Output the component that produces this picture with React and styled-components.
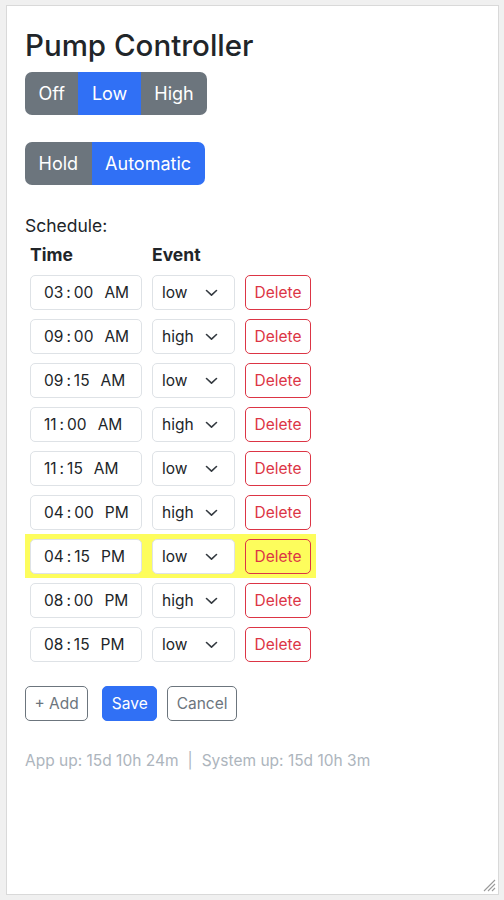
import styled, { createGlobalStyle } from "styled-components";
import { useState } from "react";

const GlobalStyle = createGlobalStyle`
  html, body {
    margin: 0;
    padding: 0;
  }
  body {
    background: #f0f0f0;
    font-family: Inter, "Liberation Sans", Arial, sans-serif;
    color: #212529;
  }
`;

const schedule = [
  { h: "03", m: "00", ap: "AM", ev: "low" },
  { h: "09", m: "00", ap: "AM", ev: "high" },
  { h: "09", m: "15", ap: "AM", ev: "low" },
  { h: "11", m: "00", ap: "AM", ev: "high" },
  { h: "11", m: "15", ap: "AM", ev: "low" },
  { h: "04", m: "00", ap: "PM", ev: "high" },
  { h: "04", m: "15", ap: "PM", ev: "low", current: true },
  { h: "08", m: "00", ap: "PM", ev: "high" },
  { h: "08", m: "15", ap: "PM", ev: "low" },
];

const ChevronDown = () => (
  <svg width="13" height="8" viewBox="0 0 13 8" fill="none">
    <path
      d="M1.5 1.5 L6.5 6.2 L11.5 1.5"
      stroke="#343a40"
      strokeWidth="1.6"
      strokeLinecap="round"
      strokeLinejoin="round"
    />
  </svg>
);

const ResizeGrip = () => (
  <svg width="15" height="15" viewBox="0 0 15 15">
    <path d="M14 3 L3 14 M14 7 L7 14 M14 11 L11 14" stroke="#9a9a9a" strokeWidth="1.1" />
  </svg>
);

const App = () => {
  const [speed, setSpeed] = useState("Low");
  const [mode, setMode] = useState("Automatic");

  return (
    <>
      <GlobalStyle />
      <Frame>
        <Title>Pump Controller</Title>

        <GroupWrap>
          <ButtonGroup>
            {["Off", "Low", "High"].map((s) => (
              <GroupButton key={s} $active={speed === s} onClick={() => setSpeed(s)}>
                {s}
              </GroupButton>
            ))}
          </ButtonGroup>
        </GroupWrap>

        <GroupWrap>
          <ButtonGroup>
            {["Hold", "Automatic"].map((s) => (
              <GroupButton key={s} $active={mode === s} onClick={() => setMode(s)}>
                {s}
              </GroupButton>
            ))}
          </ButtonGroup>
        </GroupWrap>

        <Label>Schedule:</Label>
        <Table>
          <thead>
            <tr>
              <Th>Time</Th>
              <Th>Event</Th>
              <Th />
            </tr>
          </thead>
          <tbody>
            {schedule.map((row, i) => (
              <Row key={i} $current={row.current}>
                <Td>
                  <TimeField>
                    <span>{row.h}</span>
                    <Colon>:</Colon>
                    <span>{row.m}</span>
                    <AmPm>{row.ap}</AmPm>
                  </TimeField>
                </Td>
                <Td>
                  <SelectWrap>
                    <Select defaultValue={row.ev}>
                      <option value="low">low</option>
                      <option value="high">high</option>
                    </Select>
                    <Chevron>
                      <ChevronDown />
                    </Chevron>
                  </SelectWrap>
                </Td>
                <Td>
                  <SmallButton $variant="danger">Delete</SmallButton>
                </Td>
              </Row>
            ))}
          </tbody>
        </Table>

        <Actions>
          <SmallButton $variant="secondary">+ Add</SmallButton>
          <SmallButton $variant="primary">Save</SmallButton>
          <SmallButton $variant="secondary">Cancel</SmallButton>
        </Actions>

        <Uptime>
          App up: 15d 10h 24m<Sep>|</Sep>System up: 15d 10h 3m
        </Uptime>

        <Grip>
          <ResizeGrip />
        </Grip>
      </Frame>
    </>
  );
};

export default App;

const Frame = styled.div`
  position: relative;
  box-sizing: border-box;
  margin: 5px 0 0 6px;
  width: 493px;
  height: 890px;
  background: #fff;
  border: 1px solid #d9d9d9;
  padding: 22px 18px 18px;
`;

const Title = styled.h3`
  margin: 0 0 9px;
  font-size: 29.5px;
  font-weight: 500;
  line-height: 1.2;
`;

const GroupWrap = styled.div`
  margin-bottom: 27px;
`;

const ButtonGroup = styled.div`
  display: inline-flex;
  border-radius: 7px;
  overflow: hidden;
`;

const GroupButton = styled.button`
  border: none;
  margin: 0;
  padding: 8px 13.5px;
  font-family: inherit;
  font-size: 18px;
  line-height: 27px;
  color: #fff;
  background: ${({ $active }) => ($active ? "#3070f5" : "#6c757d")};
  cursor: pointer;
`;

const Label = styled.div`
  font-size: 17.5px;
  line-height: 27px;
`;

const Table = styled.table`
  border-collapse: collapse;
`;

const Th = styled.th`
  text-align: left;
  font-size: 17.5px;
  font-weight: 700;
  line-height: 27px;
  padding: 2px 5px;
`;

const Row = styled.tr`
  background: ${({ $current }) => ($current ? "#fdfd5c" : "transparent")};
`;

const Td = styled.td`
  padding: 4.5px 5px;
`;

const TimeField = styled.div`
  box-sizing: border-box;
  display: flex;
  align-items: center;
  width: 112px;
  height: 35px;
  padding-left: 13px;
  background: #fff;
  border: 1px solid #dee2e6;
  border-radius: 5px;
  font-size: 15.5px;
`;

const Colon = styled.span`
  margin: 0 3px;
`;

const AmPm = styled.span`
  margin-left: 11px;
`;

const SelectWrap = styled.div`
  position: relative;
  width: 83px;
`;

const Select = styled.select`
  box-sizing: border-box;
  appearance: none;
  width: 83px;
  height: 35px;
  padding: 0 0 0 9px;
  background: #fff;
  border: 1px solid #dee2e6;
  border-radius: 5px;
  font-family: inherit;
  font-size: 15.5px;
  color: #212529;
`;

const Chevron = styled.span`
  position: absolute;
  right: 17px;
  top: 14px;
  display: flex;
  pointer-events: none;
`;

const variants = {
  danger: { color: "#dc3545", border: "#dc3545", bg: "transparent" },
  secondary: { color: "#6c757d", border: "#6c757d", bg: "transparent" },
  primary: { color: "#fff", border: "#3070f5", bg: "#3070f5" },
};

const SmallButton = styled.button`
  box-sizing: border-box;
  height: 35px;
  padding: 0 8.5px;
  font-family: inherit;
  font-size: 15.5px;
  color: ${({ $variant }) => variants[$variant].color};
  background: ${({ $variant }) => variants[$variant].bg};
  border: 1px solid ${({ $variant }) => variants[$variant].border};
  border-radius: 5px;
  cursor: pointer;
`;

const Actions = styled.div`
  display: flex;
  gap: 10px;
  margin-top: 20px;

  & > :first-child {
    margin-right: 4px;
  }
`;

const Uptime = styled.div`
  margin-top: 28px;
  font-size: 15.5px;
  line-height: 24px;
  color: #adb5bd;
`;

const Sep = styled.span`
  margin: 0 9px;
`;

const Grip = styled.span`
  position: absolute;
  right: 2px;
  bottom: 2px;
  display: flex;
`;
